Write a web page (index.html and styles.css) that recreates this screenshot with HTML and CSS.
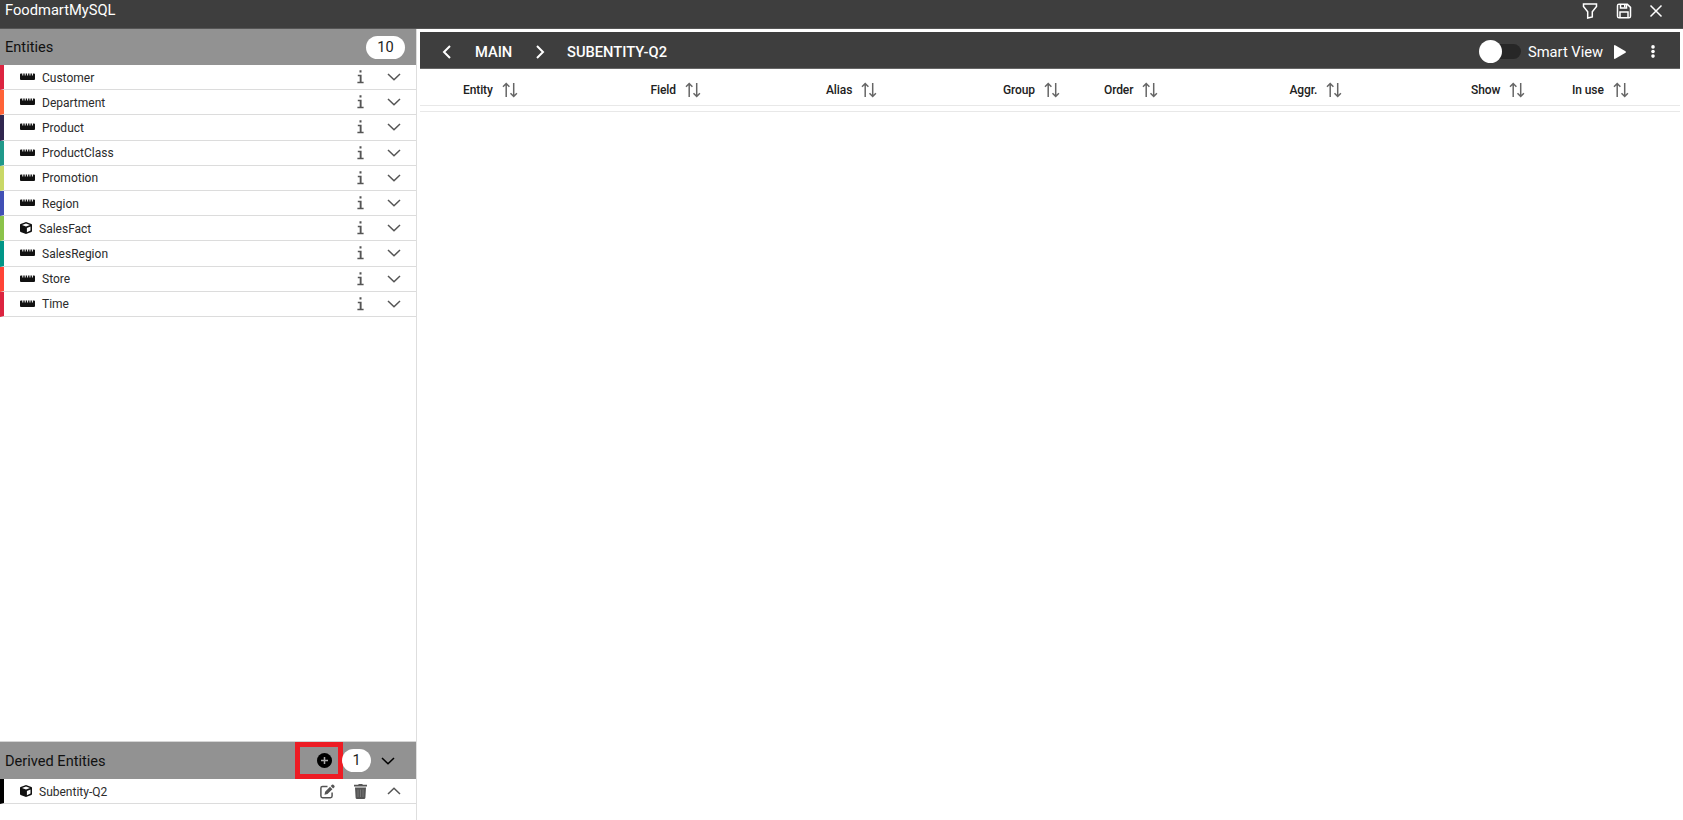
FILE: index.html
```html
<!DOCTYPE html>
<html lang="en">
<head>
  <meta charset="UTF-8">
  <meta name="viewport" content="width=device-width, initial-scale=1.0">
  <title>FoodmartMySQL</title>
  <link rel="stylesheet" href="styles.css">
</head>
<body>
  <!-- Shared icons -->
  <svg class="sprite">
    <symbol id="ruler" viewBox="0 0 15 7"><path d="M1 .5h1.300v2h1V.5h1.400v2h1V.5h1.400v2h1V.5h1.400v2h1V.5h1.400v2h1V.5H14a1 1 0 0 1 1 1V6a1 1 0 0 1-1 1H1a1 1 0 0 1-1-1V1.500a1 1 0 0 1 1-1z"/></symbol>
    <symbol id="cube" viewBox="0 0 12 12"><path fill-rule="evenodd" d="M6 0l5.400 2q.6.2.6.9v6q0 .7-.6 1L6 12 .6 9.900Q0 9.600 0 8.900v-6q0-.7.6-.9zM6 1.400L2 2.900l4 1.600 4-1.600zM6.900 5.900v4.300l3.600-1.600V4.400z"/></symbol>
    <symbol id="info" viewBox="0 0 7 14"><path d="M2.500.2h2v2.200h-2zM.8 4.800h3.800v6.900h2v1.500H.4v-1.500h2.300V6.300H.8z"/></symbol>
    <symbol id="chevron" viewBox="0 0 14 8"><path class="line" d="M1 1l6 5.800L13 1"/></symbol>
    <symbol id="sort" viewBox="0 0 16 16"><path class="line" d="M4.200 15V1.500M1 4.700l3.200-3.200 3.200 3.200M11.700 1v13.500M8.500 11.300l3.200 3.200 3.200-3.200"/></symbol>
  </svg>

  <header class="topbar">
    <span class="title">FoodmartMySQL</span>
    <div class="actions">
      <svg width="16" height="16" viewBox="0 0 16 16"><path class="line" d="M1.500 1h13v2.500l-4.200 5.300v5.200l-4.600 1V8.800L1.500 3.500z"/></svg>
      <svg width="16" height="16" viewBox="0 0 16 16"><path class="line" d="M3 1.200h8.300l3.200 3.200v8.800q0 1.600-1.600 1.600H3.100q-1.600 0-1.600-1.600V2.800q0-1.600 1.500-1.600zM4.500 1.200v3.900h6V1.200M4 14.800V9h8v5.800"/><path d="M8 2h1.500v2.500H8z"/></svg>
      <svg width="14" height="14" viewBox="0 0 14 14"><path class="line" d="M1.500 1.500l11 11M12.500 1.500l-11 11"/></svg>
    </div>
  </header>

  <div class="layout">
    <aside class="sidebar">
      <div class="section-head">
        <span>Entities</span>
        <span class="badge badge-total">10</span>
      </div>
      <ul class="entities">
        <li class="entity red"><svg class="ruler"><use href="#ruler"/></svg><span class="name">Customer</span><svg class="info"><use href="#info"/></svg><svg class="chevron"><use href="#chevron"/></svg></li>
        <li class="entity orange"><svg class="ruler"><use href="#ruler"/></svg><span class="name">Department</span><svg class="info"><use href="#info"/></svg><svg class="chevron"><use href="#chevron"/></svg></li>
        <li class="entity navy"><svg class="ruler"><use href="#ruler"/></svg><span class="name">Product</span><svg class="info"><use href="#info"/></svg><svg class="chevron"><use href="#chevron"/></svg></li>
        <li class="entity green"><svg class="ruler"><use href="#ruler"/></svg><span class="name">ProductClass</span><svg class="info"><use href="#info"/></svg><svg class="chevron"><use href="#chevron"/></svg></li>
        <li class="entity yellow"><svg class="ruler"><use href="#ruler"/></svg><span class="name">Promotion</span><svg class="info"><use href="#info"/></svg><svg class="chevron"><use href="#chevron"/></svg></li>
        <li class="entity blue"><svg class="ruler"><use href="#ruler"/></svg><span class="name">Region</span><svg class="info"><use href="#info"/></svg><svg class="chevron"><use href="#chevron"/></svg></li>
        <li class="entity lime"><svg class="cube"><use href="#cube"/></svg><span class="name">SalesFact</span><svg class="info"><use href="#info"/></svg><svg class="chevron"><use href="#chevron"/></svg></li>
        <li class="entity teal"><svg class="ruler"><use href="#ruler"/></svg><span class="name">SalesRegion</span><svg class="info"><use href="#info"/></svg><svg class="chevron"><use href="#chevron"/></svg></li>
        <li class="entity tomato"><svg class="ruler"><use href="#ruler"/></svg><span class="name">Store</span><svg class="info"><use href="#info"/></svg><svg class="chevron"><use href="#chevron"/></svg></li>
        <li class="entity red"><svg class="ruler"><use href="#ruler"/></svg><span class="name">Time</span><svg class="info"><use href="#info"/></svg><svg class="chevron"><use href="#chevron"/></svg></li>
      </ul>

      <div class="derived">
        <div class="section-head">
          <span>Derived Entities</span>
          <div class="add">
            <svg width="15" height="15" viewBox="0 0 15 15"><circle cx="7.500" cy="7.500" r="7.500"/><path class="plus" d="M7.500 4v7M4 7.500h7"/></svg>
          </div>
          <span class="badge badge-derived">1</span>
          <svg class="chevron"><use href="#chevron"/></svg>
        </div>
        <div class="entity black">
          <svg class="cube"><use href="#cube"/></svg>
          <span class="name">Subentity-Q2</span>
          <svg class="edit" viewBox="0 0 15 15"><path class="line" d="M7.500 2.500h-5q-1.600 0-1.600 1.600v8q0 1.600 1.600 1.600h8q1.600 0 1.600-1.600V8.500"/><path d="M4.500 10.700l.6-3L10 2.800l2.400 2.400-4.900 4.900zM10.700 2.100l1.300-1.300q.7-.6 1.400 0l1 1q.6.7 0 1.400l-1.300 1.300z"/></svg>
          <svg class="trash" viewBox="0 0 13 15"><path d="M4.200.8L4.700 0h3.600l.5.8H13v1.700H0V.8zM1 3.500h11l-.6 10.200q-.1 1.300-1.400 1.300H3q-1.300 0-1.400-1.300z"/><path class="groove" d="M4 5.500v7.500M6.500 5.500v7.500M9 5.500v7.500"/></svg>
          <svg class="chevron up"><use href="#chevron"/></svg>
        </div>
      </div>
    </aside>

    <main class="content">
      <nav class="toolbar">
        <svg class="arrow" viewBox="0 0 9 14"><path class="line" d="M8 1L2 7l6 6"/></svg>
        <span class="crumb main">MAIN</span>
        <svg class="arrow" viewBox="0 0 9 14"><path class="line" d="M1 1l6 6-6 6"/></svg>
        <span class="crumb current">SUBENTITY-Q2</span>
        <div class="tools">
          <span class="toggle"><span class="thumb"></span></span>
          <span class="smart">Smart View</span>
          <svg class="play" viewBox="0 0 12 14"><path d="M0 1q0-1.300 1.200-.8l10.300 6q.9.8 0 1.600l-10.300 6Q0 14.300 0 13z"/></svg>
          <svg class="dots" viewBox="0 0 4 13"><circle cx="2" cy="1.900" r="1.800"/><circle cx="2" cy="6.500" r="1.800"/><circle cx="2" cy="11.100" r="1.800"/></svg>
        </div>
      </nav>
      <div class="columns">
        <div class="column">Entity<svg class="sort"><use href="#sort"/></svg></div>
        <div class="column">Field<svg class="sort"><use href="#sort"/></svg></div>
        <div class="column">Alias<svg class="sort"><use href="#sort"/></svg></div>
        <div class="column">Group<svg class="sort"><use href="#sort"/></svg></div>
        <div class="column">Order<svg class="sort"><use href="#sort"/></svg></div>
        <div class="column">Aggr.<svg class="sort"><use href="#sort"/></svg></div>
        <div class="column">Show<svg class="sort"><use href="#sort"/></svg></div>
        <div class="column">In use<svg class="sort"><use href="#sort"/></svg></div>
      </div>
      <div class="empty-row"></div>
    </main>
  </div>
</body>
</html>
```
FILE: styles.css
```css
* {
  box-sizing: border-box;
}

body {
  display: flex;
  flex-direction: column;
  height: 100vh;
  margin: 0;
  overflow: hidden;
  background-color: #fff;
  color: #212121;
  font-family: Roboto, Arial, sans-serif;
}

svg {
  display: block;
  flex: none;
  fill: currentColor;
}

.sprite {
  position: absolute;
  width: 0;
  height: 0;
}

.line {
  fill: none;
  stroke: currentColor;
  stroke-width: 1.5;
}

/* Top bar */
.topbar {
  display: flex;
  justify-content: space-between;
  height: 29px;
  padding: 0 20px 0 5px;
  border-bottom: 1px solid #555;
  background-color: #3e3e3e;
  color: #fff;
}

.title {
  font-size: 14.7px;
  line-height: 21px;
}

.actions {
  display: flex;
  align-items: center;
  gap: 17.5px;
  height: 21px;
}

.layout {
  display: flex;
  flex: 1;
  min-height: 0;
}

/* Sidebar */
.sidebar {
  display: flex;
  flex-direction: column;
  width: 417px;
  border-right: 1px solid #dedede;
}

.section-head {
  display: flex;
  align-items: center;
  height: 36px;
  padding-left: 5px;
  background-color: #929292;
  color: #111;
  font-size: 14.6px;
}

.badge {
  height: 23px;
  border-radius: 12px;
  background-color: #fff;
  color: #212121;
  line-height: 23px;
  text-align: center;
}

.badge-total {
  width: 39px;
  margin-left: auto;
  margin-right: 11px;
}

.badge-derived {
  width: 29px;
  margin-left: -1px;
}

.entities {
  margin: 0;
  padding: 0;
  list-style: none;
}

.entity {
  display: flex;
  align-items: center;
  height: 25.2px;
  padding: 0 15px 0 16px;
  border-bottom: 1px solid #dcdcdc;
  border-left: 4px solid;
  font-size: 12px;
}

.entity > * {
  color: #2b2b2b;
}

.red { border-left-color: #dc2440; }
.orange { border-left-color: #ff6337; }
.navy { border-left-color: #30264f; }
.green { border-left-color: #20998a; }
.yellow { border-left-color: #c9d867; }
.blue { border-left-color: #4150b5; }
.lime { border-left-color: #8bc34a; }
.teal { border-left-color: #009688; }
.tomato { border-left-color: #ff4436; }
.black { border-left-color: #000; }

.ruler {
  width: 15px;
  height: 7px;
  margin-right: 7px;
  margin-bottom: 1px;
}

.cube {
  width: 12px;
  height: 12px;
  margin-right: 7px;
}

.entity .ruler,
.entity .cube {
  color: #111;
}

.name {
  flex: 1;
  padding-top: 1px;
}

.entity .info,
.entity .edit,
.entity .trash,
.entity .chevron {
  color: #555;
}

.info {
  width: 7px;
  height: 14px;
  margin-right: 23px;
}

.chevron {
  width: 14px;
  height: 8px;
}

/* Derived entities */
.derived {
  height: 79px;
  margin-top: auto;
  border-top: 1px solid #d5d5d5;
}

.derived .section-head {
  height: 37px;
}

.add {
  display: flex;
  align-items: center;
  align-self: stretch;
  width: 48px;
  margin-left: auto;
  padding-left: 17px;
  border: 5px solid #ed1c24;
  color: #000;
}

.plus {
  stroke: #aaa;
  stroke-width: 1.5;
}

.section-head .chevron {
  margin: 0 21px 0 10px;
  color: #000;
  stroke-width: 2;
}

.edit {
  width: 15px;
  height: 15px;
  margin-right: 19px;
}

.trash {
  width: 13px;
  height: 15px;
  margin-right: 20px;
}

.groove {
  stroke: #777;
}

.up {
  transform: scaleY(-1);
}

/* Query panel */
.content {
  flex: 1;
  padding: 3px 3px 0;
}

.toolbar {
  display: flex;
  align-items: center;
  height: 37px;
  padding: 3px 25px 0 22px;
  border-bottom: 1px solid #666;
  background-color: #3e3e3e;
  color: #fff;
  font-size: 14.7px;
}

.arrow {
  width: 9px;
  height: 14px;
}

.arrow .line {
  stroke-width: 2;
}

.crumb {
  font-weight: 500;
}

.main {
  width: 37px;
  margin: 0 24px;
}

.current {
  margin-left: 22px;
}

.tools {
  display: flex;
  align-items: center;
  margin-left: auto;
}

.toggle {
  display: flex;
  align-items: center;
  width: 37px;
  height: 15px;
  margin-right: 7px;
  border-radius: 8px;
  background-color: #272727;
}

.thumb {
  flex: none;
  width: 23px;
  height: 23px;
  margin-left: -5px;
  border-radius: 50%;
  background-color: #fff;
}

.smart {
  width: 76px;
  white-space: nowrap;
}

.play {
  width: 12px;
  height: 14px;
  margin: 0 25px 0 10px;
}

.dots {
  width: 4px;
  height: 13px;
}

.columns {
  display: grid;
  grid-template-columns: 187.5px 175.5px 177px 101px 185.5px 181.5px 101px 1fr;
  height: 37px;
  padding: 6px 0 0 43px;
  border-bottom: 1px solid #e8e8e8;
  font-size: 12px;
  font-weight: 500;
  letter-spacing: -0.1px;
}

.column {
  display: flex;
  align-items: center;
  gap: 9px;
}

.sort {
  width: 16px;
  height: 16px;
  color: #666;
}

.empty-row {
  height: 6px;
  border-bottom: 1px solid #e8e8e8;
}
```
